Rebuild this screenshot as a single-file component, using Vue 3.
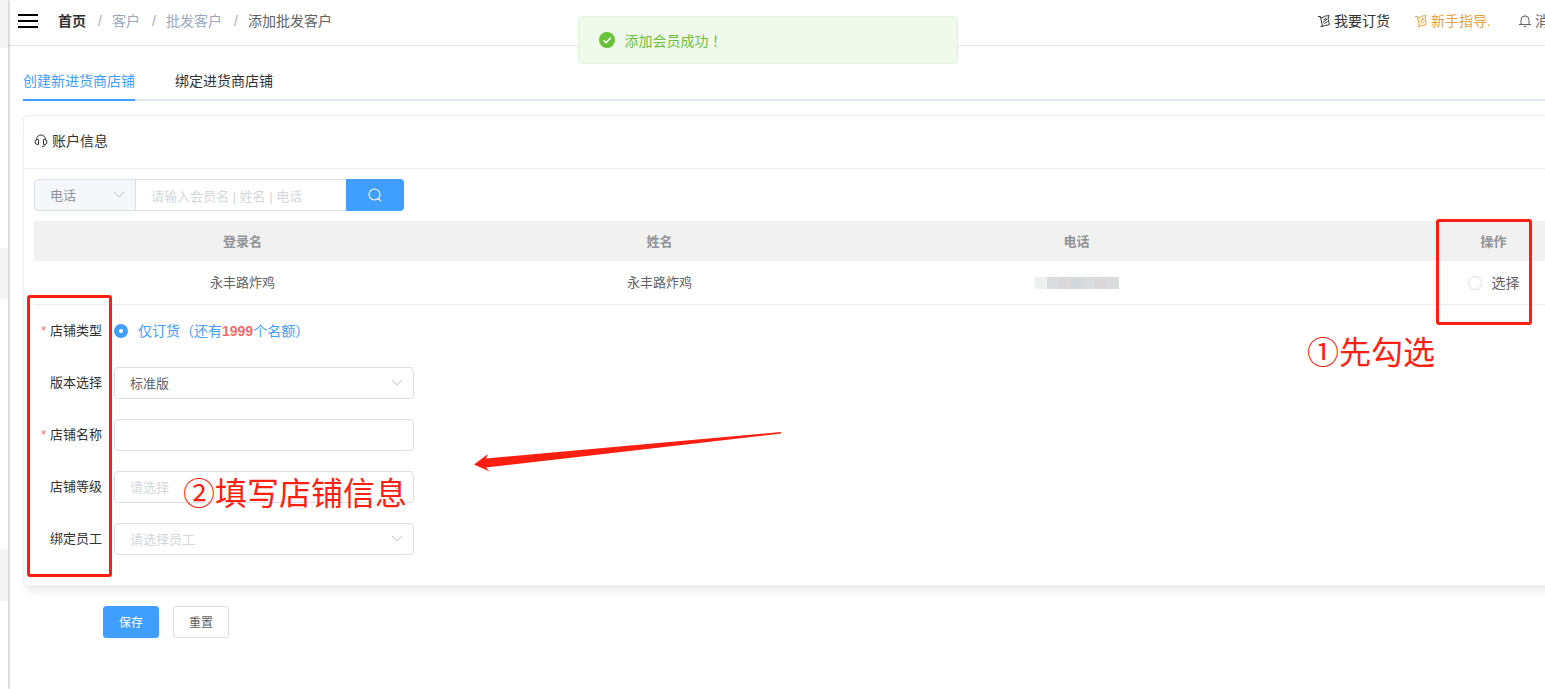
<script setup>
import { ref } from 'vue'

const searchType = ref('phone')
const keyword = ref('')
const picked = ref('')
const shopType = ref('order')
const version = ref('standard')
const shopName = ref('')
const shopLevel = ref('')
const staff = ref('')

const members = [{ id: 'm1', login: '永丰路炸鸡', name: '永丰路炸鸡' }]

function reset() {
  version.value = 'standard'
  shopName.value = ''
  shopLevel.value = ''
  staff.value = ''
}
</script>

<template>
  <div class="page">
    <aside class="sidebar">
      <span class="side-block"></span>
      <span class="side-block"></span>
      <span class="side-block"></span>
    </aside>

    <div class="main">
      <header class="topbar">
        <button class="menu-btn" type="button" aria-label="菜单">
          <svg width="20" height="16" viewBox="0 0 20 16"><path d="M0 2h20M0 8h20M0 14h20" stroke="#000" stroke-width="2" /></svg>
        </button>
        <nav class="crumbs">
          <a href="#" class="home">首页</a>
          <span class="sep">/</span>
          <a href="#">客户</a>
          <span class="sep">/</span>
          <a href="#">批发客户</a>
          <span class="sep">/</span>
          <span class="current">添加批发客户</span>
        </nav>
        <nav class="tools">
          <a href="#" class="tool">
            <svg class="flag" viewBox="0 0 14 14"><path d="M1 2.500h2.500l2 10M3.500 3.500c2 1 3-1 5-1.500 1.500-.5 2.500 0 3.500-.5l-1 3.500 1.500 5.500c-2 1-3 .5-4.500 1-1 .4-2.500 1-4.500 1M6.500 6l3-2M6 8.500l4-3.500M7.500 9.500l3-2" /></svg>
            我要订货
          </a>
          <a href="#" class="tool guide">
            <svg class="flag" viewBox="0 0 14 14"><path d="M1 2.500h2.500l2 10M3.500 3.500c2 1 3-1 5-1.500 1.500-.5 2.500 0 3.500-.5l-1 3.500 1.500 5.500c-2 1-3 .5-4.500 1-1 .4-2.500 1-4.500 1M6.500 6l3-2M6 8.500l4-3.500M7.500 9.500l3-2" /></svg>
            新手指导.
          </a>
          <a href="#" class="tool notice">
            <svg class="flag" viewBox="0 0 14 14"><path d="M7 .8v1M3 10.500V6a4 4 0 0 1 8 0v4.500M1 10.500h12M5.800 12.500h2.400" /></svg>
            消息
          </a>
        </nav>
      </header>

      <main class="content">
        <div class="tabs">
          <button type="button" class="tab active">创建新进货商店铺</button>
          <button type="button" class="tab">绑定进货商店铺</button>
        </div>

        <section class="card">
          <h2 class="card-head">
            <svg width="14" height="14" viewBox="0 0 14 14" fill="none" stroke="#303133"><path d="M2.500 6V5.500a4.500 4.500 0 0 1 9 0V6M4.500 5.500v5H3.500a2.500 2.500 0 0 1 0-5zM9.500 5.500v5h1a2.500 2.500 0 0 0 0-5zM11 10.500c0 1.500-1 2-3 2" /></svg>
            账户信息
          </h2>
          <div class="card-body">
            <form class="search" @submit.prevent>
              <div class="select-box type">
                <select v-model="searchType" aria-label="搜索类型">
                  <option value="phone">电话</option>
                </select>
                <svg class="chevron" viewBox="0 0 12 8"><path d="M1 1l5 5 5-5" /></svg>
              </div>
              <input v-model="keyword" class="keyword" type="text" aria-label="关键词" placeholder="请输入会员名 | 姓名 | 电话" />
              <button class="search-btn" type="submit" aria-label="搜索">
                <svg width="14" height="14" viewBox="0 0 14 14" fill="none" stroke="#fff" stroke-width="1.100"><circle cx="6.500" cy="6.500" r="5.500" /><path d="M10 10.500l3 2.500" /></svg>
              </button>
            </form>

            <table class="members">
              <thead>
                <tr><th>登录名</th><th>姓名</th><th>电话</th><th>操作</th></tr>
              </thead>
              <tbody>
                <tr v-for="m in members" :key="m.id">
                  <td>{{ m.login }}</td>
                  <td>{{ m.name }}</td>
                  <td><span class="mosaic"><i v-for="n in 7" :key="n"></i></span></td>
                  <td>
                    <label class="radio"><input v-model="picked" type="radio" name="member" :value="m.id" />选择</label>
                  </td>
                </tr>
              </tbody>
            </table>

            <form id="shop-form" class="shop-form" @submit.prevent>
              <div class="row">
                <span class="label required">店铺类型</span>
                <label class="radio on">
                  <input v-model="shopType" type="radio" name="shopType" value="order" />
                  <span>仅订货（还有<b>1999</b>个名额）</span>
                </label>
              </div>
              <div class="row">
                <label class="label" for="version">版本选择</label>
                <div class="select-box">
                  <select id="version" v-model="version"><option value="standard">标准版</option></select>
                  <svg class="chevron" viewBox="0 0 12 8"><path d="M1 1l5 5 5-5" /></svg>
                </div>
              </div>
              <div class="row">
                <label class="label required" for="shopName">店铺名称</label>
                <input id="shopName" v-model="shopName" class="field" type="text" />
              </div>
              <div class="row">
                <label class="label" for="level">店铺等级</label>
                <div class="select-box empty">
                  <select id="level" v-model="shopLevel"><option value="">请选择</option></select>
                  <svg class="chevron" viewBox="0 0 12 8"><path d="M1 1l5 5 5-5" /></svg>
                </div>
              </div>
              <div class="row">
                <label class="label" for="staff">绑定员工</label>
                <div class="select-box empty">
                  <select id="staff" v-model="staff"><option value="">请选择员工</option></select>
                  <svg class="chevron" viewBox="0 0 12 8"><path d="M1 1l5 5 5-5" /></svg>
                </div>
              </div>
            </form>
          </div>
        </section>

        <div class="actions">
          <button type="submit" form="shop-form" class="btn primary">保存</button>
          <button type="button" class="btn" @click="reset">重置</button>
        </div>
      </main>
    </div>

    <div class="toast" role="status">
      <svg width="16" height="16" viewBox="0 0 16 16"><circle cx="8" cy="8" r="8" fill="#67c23a" /><path d="M4.500 8.200l2.500 2.500 4.800-5" fill="none" stroke="#fff" stroke-width="1.600" /></svg>
      <span>添加会员成功<span class="punct">！</span></span>
    </div>

    <div class="mark mark-action"></div>
    <div class="mark mark-labels"></div>
    <p class="note note-pick">①先勾选</p>
    <p class="note note-fill">②填写店铺信息</p>
    <svg class="arrow" width="310" height="42" viewBox="0 0 310 42"><path d="M0 33.500L14 23l-2 4.500L307 1v1.500L12 36.500l3.500 4z" fill="#ff1f10" /></svg>
  </div>
</template>

<style>
body {
  background: #fff;
}
</style>

<style scoped>
.page {
  position: relative;
  display: flex;
  min-height: 100vh;
  overflow: hidden;
  font: 14px/20px "Liberation Sans", "Noto Sans CJK SC", sans-serif;
  color: #303133;
}
.page * {
  box-sizing: border-box;
}
button,
input,
select {
  font: inherit;
  color: inherit;
  margin: 0;
}
button {
  padding: 0;
  border: 0;
  background: none;
  cursor: pointer;
}
a {
  color: inherit;
  text-decoration: none;
}
.sidebar {
  flex: 0 0 8px;
  display: grid;
  grid-template-rows: 48px 51px 52px;
  align-content: start;
  row-gap: 200px;
  background: #fff;
  box-shadow: 1px 0 3px rgba(0, 0, 0, 0.25);
  z-index: 1;
}
.side-block {
  background: #f4f4f4;
}
.side-block:last-child {
  margin: 50px 0 -50px;
}
.main {
  flex: 1 0 1709px;
}
.topbar {
  display: flex;
  align-items: center;
  height: 46px;
  padding: 0 154px 4px 10px;
  border-bottom: 1px solid #e6e6e6;
}
.menu-btn {
  display: flex;
  width: 40px;
}
.crumbs {
  display: flex;
  gap: 10px;
  color: #97a8be;
}
.sep {
  width: 6px;
  text-align: right;
  color: #a8adb8;
}
.home {
  font-weight: 700;
  color: #303133;
}
.current {
  color: #606266;
}
.tools {
  display: flex;
  gap: 24px;
  margin-left: auto;
}
.tool {
  display: flex;
  align-items: center;
  gap: 3px;
}
.guide {
  color: #e6a23c;
}
.notice {
  padding-left: 3px;
  color: #606266;
}
.flag {
  width: 14px;
  height: 14px;
  fill: none;
  stroke: currentColor;
}
.content {
  padding: 16px 4px 0 15px;
}
.tabs {
  display: flex;
  gap: 40px;
  border-bottom: 2px solid #e4e7ed;
}
.tab {
  height: 39px;
  margin-bottom: -2px;
  border-bottom: 2px solid transparent;
}
.tab.active {
  color: #409eff;
  border-color: #409eff;
}
.card {
  margin-top: 14px;
  border: 1px solid #ebeef5;
  border-radius: 4px;
  box-shadow: 0 8px 10px -4px rgba(0, 0, 0, 0.1);
}
.card-head {
  display: flex;
  align-items: center;
  gap: 4px;
  height: 53px;
  margin: 0;
  padding: 0 10px 2px;
  border-bottom: 1px solid #ebeef5;
  font-size: 14px;
  font-weight: 400;
}
.card-body {
  padding: 10px;
}
.search {
  display: flex;
  width: 370px;
  font-size: 13px;
}
.select-box {
  position: relative;
  width: 300px;
  color: #606266;
}
.select-box select,
.field,
.keyword {
  appearance: none;
  width: 100%;
  height: 32px;
  padding: 2px 15px 0;
  border: 1px solid #dcdfe6;
  border-radius: 4px;
  background: #fff;
  outline: none;
}
.select-box.empty select {
  color: #d4d7de;
}
.chevron {
  position: absolute;
  right: 11px;
  top: 12px;
  width: 12px;
  height: 8px;
  fill: none;
  stroke: #c0c4cc;
  pointer-events: none;
}
.select-box.type {
  flex: 0 0 102px;
  color: #909399;
}
.type select {
  background: #f5f7fa;
  border-radius: 4px 0 0 4px;
}
.keyword {
  flex: 1;
  min-width: 0;
  border-left: 0;
  border-right: 0;
  border-radius: 0;
}
.keyword::placeholder {
  color: #d4d7de;
}
.search-btn {
  display: flex;
  align-items: center;
  justify-content: center;
  flex: 0 0 58px;
  background: #409eff;
  border-radius: 0 4px 4px 0;
}
.members {
  width: 100%;
  margin: 10px 0;
  table-layout: fixed;
  border-collapse: separate;
  border-spacing: 0;
  font-size: 13px;
  text-align: center;
}
.members th {
  height: 40px;
  padding: 2px 0 0;
  background: #f1f1f1;
  color: #909399;
}
.members td {
  height: 44px;
  padding: 0;
  border-bottom: 1px solid #ebeef5;
  color: #606266;
}
.mosaic {
  display: inline-flex;
  vertical-align: middle;
}
.mosaic i {
  width: 12px;
  height: 12px;
  background: #dadcde;
}
.mosaic i:first-child {
  background: #eef0f0;
}
.mosaic i:nth-child(3n) {
  background: #dbd8d9;
}
.mosaic i:nth-child(4) {
  background: #d3d8dc;
}
.radio {
  display: inline-flex;
  align-items: center;
  gap: 10px;
  font-size: 14px;
  vertical-align: middle;
}
.radio input {
  appearance: none;
  width: 14px;
  height: 14px;
  border: 1px solid #dcdfe6;
  border-radius: 50%;
  background: #fff;
}
.radio input:checked {
  border: 5px solid #409eff;
}
.radio.on {
  color: #409eff;
}
.radio b {
  color: #f56c6c;
}
.shop-form {
  display: grid;
  gap: 20px;
  padding-bottom: 20px;
  font-size: 13px;
}
.row {
  display: flex;
  align-items: center;
  height: 32px;
}
.label {
  width: 80px;
  padding-right: 12px;
  text-align: right;
}
.label.required::before {
  content: "*";
  margin-right: 4px;
  color: #f56c6c;
}
.field {
  width: 300px;
}
.actions {
  display: flex;
  gap: 14px;
  padding: 20px 80px;
}
.btn {
  width: 56px;
  height: 32px;
  padding-top: 2px;
  border: 1px solid #dcdfe6;
  border-radius: 3px;
  font-size: 12px;
  color: #606266;
}
.btn.primary {
  border-color: #409eff;
  background: #409eff;
  color: #fff;
}
.toast {
  position: absolute;
  top: 16px;
  left: 50%;
  display: flex;
  align-items: center;
  gap: 10px;
  width: 380px;
  height: 48px;
  margin-left: -195px;
  padding: 0 20px;
  border: 1px solid #e1f3d8;
  border-radius: 4px;
  background: #f0f9eb;
  color: #67c23a;
  z-index: 2;
}
.punct {
  font-family: "Noto Sans CJK TC", sans-serif;
}
.mark {
  position: absolute;
  border: 3px solid #ff1f10;
  border-radius: 3px;
}
.mark-action {
  left: 1436px;
  top: 219px;
  width: 96px;
  height: 106px;
}
.mark-labels {
  left: 27px;
  top: 295px;
  width: 85px;
  height: 282px;
}
.note {
  position: absolute;
  margin: 0;
  font-size: 32px;
  line-height: 40px;
  color: #ff1f10;
  white-space: nowrap;
}
.note-pick {
  left: 1307px;
  top: 333px;
}
.note-fill {
  left: 183px;
  top: 474px;
}
.arrow {
  position: absolute;
  left: 474px;
  top: 431px;
}
</style>
